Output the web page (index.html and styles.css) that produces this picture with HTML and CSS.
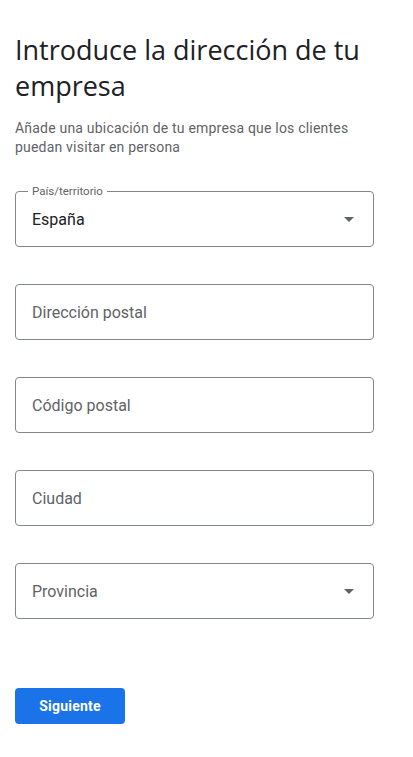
FILE: index.html
```html
<!DOCTYPE html>
<html lang="es">
<head>
<meta charset="utf-8">
<title>Dirección de la empresa</title>
<link rel="stylesheet" href="styles.css">
</head>
<body>
<main class="page">
  <h1 class="title">Introduce la dirección de tu empresa</h1>
  <p class="subtitle">Añade una ubicación de tu empresa que los clientes puedan visitar en persona</p>
  <form class="form">
    <div class="field">
      <span class="field-label">País/territorio</span>
      <span class="field-value">España</span>
      <svg class="arrow" width="10" height="5" viewBox="0 0 10 5"><path d="M0 0h10L5 5z" fill="#5f6368"/></svg>
    </div>
    <div class="field"><span class="field-placeholder">Dirección postal</span></div>
    <div class="field"><span class="field-placeholder">Código postal</span></div>
    <div class="field"><span class="field-placeholder">Ciudad</span></div>
    <div class="field"><span class="field-placeholder">Provincia</span>
      <svg class="arrow" width="10" height="5" viewBox="0 0 10 5"><path d="M0 0h10L5 5z" fill="#5f6368"/></svg>
    </div>
    <div class="actions"><button type="button" class="btn-primary">Siguiente</button></div>
  </form>
</main>
</body>
</html>
```
FILE: styles.css
```css
html, body { margin: 0; padding: 0; background: #fff; }
body { font-family: Roboto, "Liberation Sans", Arial, sans-serif; color: #202124; }
.page { padding: 32px 39px 0 15px; }
.title {
  margin: 0;
  font-family: "Open Sans", Roboto, sans-serif;
  font-weight: 400;
  font-size: 27px;
  line-height: 36px;
  color: #202124;
}
.subtitle {
  margin: 15px 0 0;
  font-size: 14px;
  line-height: 19px;
  color: #5f6368;
  letter-spacing: 0.2px;
}
.form { display: flex; flex-direction: column; gap: 37px; margin-top: 34px; }
.field {
  position: relative;
  box-sizing: border-box;
  height: 56px;
  padding: 0 16px;
  border: 1px solid #80868b;
  border-radius: 4px;
  display: flex;
  align-items: center;
  justify-content: space-between;
}
.field-label {
  position: absolute;
  top: -8px;
  left: 12px;
  padding: 0 4px;
  background: #fff;
  font-size: 11.5px;
  line-height: 14px;
  color: #5f6368;
}
.field-value { font-size: 16px; color: #202124; }
.field-placeholder { font-size: 16px; color: #5f6368; }
.arrow { flex: none; margin-right: 3px; }
.actions { margin-top: 32px; }
.btn-primary {
  width: 110px;
  height: 36px;
  border: 0;
  border-radius: 4px;
  background: #1a73e8;
  color: #fff;
  font-family: Roboto, sans-serif;
  font-weight: 700;
  font-size: 14px;
  letter-spacing: 0.2px;
}
```
